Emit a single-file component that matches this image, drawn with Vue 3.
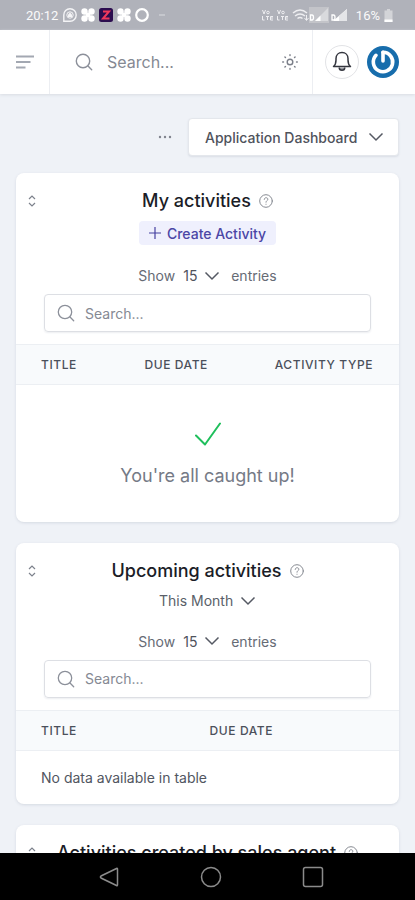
<script setup>
import { ref } from 'vue'

const query = ref('')
const dashboard = ref('Application Dashboard')

const cards = ref([
  {
    id: 'mine',
    title: 'My activities',
    create: true,
    size: '15',
    search: '',
    columns: ['Title', 'Due date', 'Activity type'],
    caughtUp: true
  },
  {
    id: 'upcoming',
    title: 'Upcoming activities',
    period: 'This Month',
    size: '15',
    search: '',
    columns: ['Title', 'Due date'],
    caughtUp: false
  },
  {
    id: 'agent',
    title: 'Activities created by sales agent',
    period: 'This Month',
    size: '15',
    search: '',
    columns: ['Title', 'Due date'],
    caughtUp: false
  }
])
</script>

<template>
  <div class="screen">
    <div class="status">
      <span class="clock">20:12</span>
      <svg class="s-left" width="104" height="16" viewBox="0 0 104 16" aria-hidden="true">
        <g fill="none" stroke="#f4f4f6" stroke-width="1.4">
          <path d="M1.8 14.2V8A6.2 6.2 0 1 1 8 14.2Z" />
          <circle cx="8" cy="8" r="3.2" stroke-width="1" />
        </g>
        <path d="M8 5.5l2 2v2.500H6V7.500Z" fill="#f4f4f6" />
        <g fill="#fff">
          <g id="clover">
            <circle cx="22.500" cy="4.500" r="3.200" />
            <circle cx="29.500" cy="4.500" r="3.200" />
            <circle cx="22.500" cy="11.500" r="3.200" />
            <circle cx="29.500" cy="11.500" r="3.200" />
            <circle cx="26" cy="8" r="2.500" />
          </g>
          <use href="#clover" x="36" />
        </g>
        <rect x="37" y="1" width="14" height="14" rx="2.500" fill="#2c0d4f" />
        <path d="M41 4.500h6l-6 7h6.500" fill="none" stroke="#f0385c" stroke-width="2" />
        <circle cx="80" cy="8" r="5.800" fill="none" stroke="#fff" stroke-width="2.200" />
        <path d="M97 8h6" stroke="#d4d5da" stroke-width="1.200" />
      </svg>
      <svg class="s-right" width="90" height="16" viewBox="0 0 90 16" aria-hidden="true">
        <g fill="none" stroke="#eeeef1" stroke-width="1">
          <g id="volte">
            <path d="M1.500 3l1.500 4 1.500-4" />
            <circle cx="7" cy="5.500" r="1.300" />
            <path d="M1.500 9v4h2M5 9.500h3M6.500 9.500V13M12 9.500H9.500V13H12M9.500 11H12" />
          </g>
          <use href="#volte" x="15" />
          <g stroke-width="1.500">
            <path d="M32 6q7-6 14 0M34 9q5-4 10 0M36.500 11.500q2.500-2 5 0" />
          </g>
          <path d="M45.500 8v5M43.500 11l2 2.500 2-2.500" />
        </g>
        <rect x="48" y="0" width="20" height="16" fill="#c3c4c9" />
        <path d="M54 14L67 1V14Z" fill="#d9dadd" />
        <path d="M54 14l5.500-5.500V14ZM72 14L86 2V14Z" fill="#fff" />
        <path d="M78 14V9L86 2V14Z" fill="#e4e5e8" />
        <path d="M49.500 8h1.500q1.500 0 1.500 2.500T51 13h-1.500ZM71 8h1.500q1.500 0 1.500 2.500T72.500 13H71Z" fill="none" stroke="#fff" stroke-width="1.300" />
      </svg>
      <span class="battery">16%</span>
      <svg width="9" height="13" viewBox="0 0 9 13" aria-hidden="true">
        <path d="M3 0h3v1.500h2.500V13h-8V1.500H3Z" fill="#d3d4d8" />
        <path d="M.5 10.500h8V13h-8Z" fill="#fff" />
      </svg>
    </div>

    <header class="topbar">
      <button class="menu" type="button" aria-label="Menu">
        <svg width="18" height="14" viewBox="0 0 18 14"><path d="M0 1.500h18M0 7h14.500M0 12.500h9.500" stroke="#a3a8b2" stroke-width="2.200" /></svg>
      </button>
      <label class="global-search">
        <svg width="18" height="18" viewBox="0 0 18 18" fill="none" stroke="#8c909a" stroke-width="1.400" stroke-linecap="round"><circle cx="8" cy="8" r="6.700" /><path d="M13 13l3.700 3.700" /></svg>
        <input v-model="query" type="text" placeholder="Search..." aria-label="Search" />
      </label>
      <button class="theme" type="button" aria-label="Theme">
        <svg width="18" height="18" viewBox="0 0 18 18" fill="none" stroke="#7b7f89" stroke-width="1.400" stroke-linecap="round"><circle cx="9" cy="9" r="2.800" /><path d="M9 1.700v.8M9 15.500v.8M1.700 9h.8M15.500 9h.8M3.900 3.900l.6.600M13.500 13.500l.6.600M3.900 14.100l.6-.6M13.500 4.500l.6-.6" /></svg>
      </button>
      <div class="account">
        <button class="bell" type="button" aria-label="Notifications">
          <svg width="20" height="22" viewBox="0 0 20 22" fill="none" stroke="#34363f" stroke-width="1.500" stroke-linejoin="round"><path d="M1.500 15.500C3.500 14 4 12 4 9V7.500C4 4 6.500 1.500 10 1.500s6 2.500 6 6V9c0 3 .5 5 2.500 6.500Z" /><path d="M7.200 16.500a2.800 2.800 0 0 0 5.600 0" fill="#9b9da4" /></svg>
        </button>
        <button class="avatar" type="button" aria-label="Account">
          <svg width="32" height="32" viewBox="0 0 32 32"><circle cx="16" cy="16" r="16" fill="#176dac" /><g fill="none" stroke="#fff" stroke-width="3.600" stroke-linecap="round"><path d="M16 6.300V15" /><path d="M16 6.300A9.700 9.700 0 1 1 9 9.300" /></g></svg>
        </button>
      </div>
    </header>

    <main class="content">
      <div class="toolbar">
        <button class="more" type="button" aria-label="More">
          <svg width="14" height="4" viewBox="0 0 14 4" fill="#80848e"><circle cx="2" cy="2" r="1.200" /><circle cx="7" cy="2" r="1.200" /><circle cx="12" cy="2" r="1.200" /></svg>
        </button>
        <div class="pick dashboard">
          <select v-model="dashboard" aria-label="Dashboard"><option>Application Dashboard</option></select>
          <svg class="chevron" width="16" height="10" viewBox="0 0 16 10"><path d="M1.500 1.500L8 8l6.500-6.500" /></svg>
        </div>
      </div>

      <section v-for="card in cards" :key="card.id" class="card">
        <div class="heading">
          <button class="drag" type="button" aria-label="Move card">
            <svg width="8" height="12" viewBox="0 0 8 12" fill="none" stroke="#7d828c" stroke-width="1.200"><path d="M1 4l3-3 3 3M1 8l3 3 3-3" /></svg>
          </button>
          <h2>{{ card.title }}</h2>
          <svg class="help" width="14" height="14" viewBox="0 0 14 14" fill="none" stroke="#868a92" stroke-width="1" stroke-linecap="round"><circle cx="7" cy="7" r="6.300" /><path d="M5.200 5.400C5.200 3 9 3.200 8.800 5.400 8.700 6.700 7 6.600 7 8.200M7 10.200v.1" /></svg>
        </div>
        <button v-if="card.create" class="create" type="button">
          <svg width="12" height="12" viewBox="0 0 12 12" stroke="#4540a0" stroke-width="1.200"><path d="M6 0v12M0 6h12" /></svg>
          Create Activity
        </button>
        <div v-else class="pick period">
          <select v-model="card.period" aria-label="Period"><option>This Month</option></select>
          <svg class="chevron" width="16" height="10" viewBox="0 0 16 10"><path d="M1.500 1.500L8 8l6.500-6.500" /></svg>
        </div>
        <div class="length">
          <label :for="card.id + '-size'">Show</label>
          <div class="pick size">
            <select :id="card.id + '-size'" v-model="card.size"><option>15</option></select>
            <svg class="chevron" width="16" height="10" viewBox="0 0 16 10"><path d="M1.500 1.500L8 8l6.500-6.500" /></svg>
          </div>
          <span>entries</span>
        </div>
        <label class="filter">
          <svg width="18" height="18" viewBox="0 0 18 18" fill="none" stroke="#8c909a" stroke-width="1.300" stroke-linecap="round"><circle cx="8" cy="8" r="6.700" /><path d="M13 13l3.700 3.700" /></svg>
          <input v-model="card.search" type="text" placeholder="Search..." aria-label="Search table" />
        </label>
        <table :class="{ three: card.columns.length === 3 }">
          <thead>
            <tr><th v-for="c in card.columns" :key="c" scope="col">{{ c }}</th></tr>
          </thead>
          <tbody>
            <tr>
              <td v-if="card.caughtUp" class="done" :colspan="card.columns.length">
                <svg width="26" height="24" viewBox="0 0 26 24" fill="none" stroke="#1fbf5c" stroke-width="2" stroke-linecap="round" stroke-linejoin="round"><path d="M1 13.500L10 22.500 25 1.500" /></svg>
                <p>You're all caught up!</p>
              </td>
              <td v-else :colspan="card.columns.length">No data available in table</td>
            </tr>
          </tbody>
        </table>
      </section>
    </main>

    <nav class="system" aria-label="System">
      <button type="button" aria-label="Back">
        <svg width="22" height="22" viewBox="0 0 22 22"><path d="M18.500 2.500q1-.5 1 .8v15.400q0 1.300-1 .8L3 12q-1.200-1 0-2Z" /></svg>
      </button>
      <button type="button" aria-label="Home">
        <svg width="22" height="22" viewBox="0 0 22 22"><circle cx="11" cy="11" r="9.500" /></svg>
      </button>
      <button type="button" aria-label="Recent apps">
        <svg width="22" height="22" viewBox="0 0 22 22"><rect x="1.500" y="1.500" width="19" height="19" rx="2" /></svg>
      </button>
    </nav>
  </div>
</template>

<style>
body {
  background: #eff2f7;
}
</style>

<style scoped>
.screen {
  height: 100vh;
  display: flex;
  flex-direction: column;
  font-family: Inter, sans-serif;
  font-size: 14px;
  color: #666b75;
  background: #eff2f7;
}
button,
input,
select {
  font: inherit;
  color: inherit;
  border: 0;
  margin: 0;
  padding: 0;
  background: none;
  min-width: 0;
}
button {
  display: flex;
  align-items: center;
  justify-content: center;
}
input::placeholder {
  color: #858993;
  opacity: 1;
}
svg {
  flex: none;
  display: block;
}
.status {
  flex: none;
  display: flex;
  align-items: center;
  height: 30px;
  padding: 0 22px 0 26px;
  background: #b0b2ba;
  color: #fafafb;
  font-family: Roboto, sans-serif;
  font-size: 13px;
  box-sizing: border-box;
}
.clock {
  margin-right: 4px;
}
.s-right {
  margin-left: auto;
}
.battery {
  margin: 0 4px 0 5px;
}
.topbar {
  flex: none;
  display: flex;
  height: 64px;
  background: #fff;
  box-shadow: 0 1px 3px #d8dce3;
  z-index: 1;
}
.menu {
  width: 50px;
  border-right: 1px solid #eceef2;
}
.global-search {
  flex: 1;
  min-width: 0;
  display: flex;
  align-items: center;
  gap: 14px;
  padding-left: 25px;
  font-size: 16px;
}
.global-search input {
  flex: 1;
}
.theme {
  width: 44px;
}
.account {
  display: flex;
  align-items: center;
  gap: 8px;
  padding: 0 16px 0 12px;
  border-left: 1px solid #eceef2;
}
.bell {
  width: 34px;
  height: 34px;
  border: 1px solid #e2e3e6;
  border-radius: 50%;
}
.content {
  flex: 1;
  min-height: 0;
  overflow-y: auto;
  scrollbar-width: none;
  padding: 24px 16px 0;
}
.toolbar {
  display: flex;
  justify-content: flex-end;
  align-items: center;
  gap: 16px;
  margin-bottom: 17px;
}
.pick {
  display: grid;
  align-items: center;
}
.pick select,
.pick .chevron {
  grid-area: 1 / 1;
}
.pick select {
  appearance: none;
  padding-right: 22px;
  height: 20px;
}
.chevron {
  justify-self: end;
  pointer-events: none;
  fill: none;
  stroke: #555963;
  stroke-width: 1.5;
}
.dashboard {
  padding: 0 14px 0 16px;
  height: 38px;
  box-sizing: border-box;
  background: #fff;
  border: 1px solid #e4e7ec;
  border-radius: 4px;
  box-shadow: 0 1px 2px #d9dde5;
  font-weight: 500;
  color: #4f535c;
}
.dashboard select {
  padding-right: 26px;
}
.period {
  color: #5a5f69;
}
.card {
  display: flex;
  flex-direction: column;
  align-items: center;
  padding-top: 16px;
  margin-bottom: 21px;
  background: #fff;
  border-radius: 8px;
  box-shadow: 0 1px 3px #d5dae2;
  overflow: hidden;
}
.heading {
  align-self: stretch;
  display: flex;
  align-items: center;
  justify-content: center;
  height: 24px;
  margin-bottom: 8px;
  padding-right: 32px;
}
.heading h2 {
  margin: 0 8px 0 auto;
  font-size: 18px;
  line-height: 24px;
  font-weight: 500;
  color: #1b1d27;
}
.drag {
  width: 32px;
  height: 24px;
}
.help {
  margin-right: auto;
}
.create {
  gap: 6px;
  height: 24px;
  padding: 0 10px;
  border-radius: 4px;
  background: #eff0fd;
  color: #4b46a5;
  font-weight: 500;
}
.length {
  display: flex;
  align-items: center;
  gap: 8px;
  height: 21px;
  margin: 20px 0 8px;
}
.size {
  color: #4f535c;
  margin-right: 3px;
}
.filter {
  align-self: stretch;
  display: flex;
  align-items: center;
  gap: 10px;
  height: 38px;
  box-sizing: border-box;
  margin: 0 28px 12px;
  padding: 0 12px;
  border: 1px solid #dddfe4;
  border-radius: 4px;
  box-shadow: 0 1px 2px #eceef1;
}
.filter input {
  flex: 1;
}
table {
  width: 100%;
  table-layout: fixed;
  border-collapse: collapse;
}
th {
  height: 40px;
  box-sizing: border-box;
  padding: 0 0 0 25px;
  border: solid #eceff3;
  border-width: 1px 0;
  background: #f8fafc;
  text-align: left;
  text-transform: uppercase;
  font-size: 12px;
  font-weight: 500;
  letter-spacing: 0.05em;
  color: #4b505b;
}
th:first-child {
  width: 44%;
}
.three th:first-child {
  width: 27%;
}
.three th:nth-child(2) {
  width: 34%;
}
.three th {
  white-space: nowrap;
}
td {
  height: 54px;
  padding: 0 25px;
  box-sizing: border-box;
  color: #51565f;
}
.done {
  height: 137px;
  padding-top: 6px;
  text-align: center;
}
.done svg {
  margin: 0 auto 16px;
}
.done p {
  margin: 0;
  font-size: 18px;
  line-height: 28px;
  color: #757a86;
}
.system {
  flex: none;
  display: flex;
  align-items: center;
  justify-content: center;
  gap: 80px;
  height: 47px;
  padding-left: 6px;
  background: #000;
}
.system svg {
  fill: none;
  stroke: #8b8b8b;
  stroke-width: 1.5;
}
</style>
